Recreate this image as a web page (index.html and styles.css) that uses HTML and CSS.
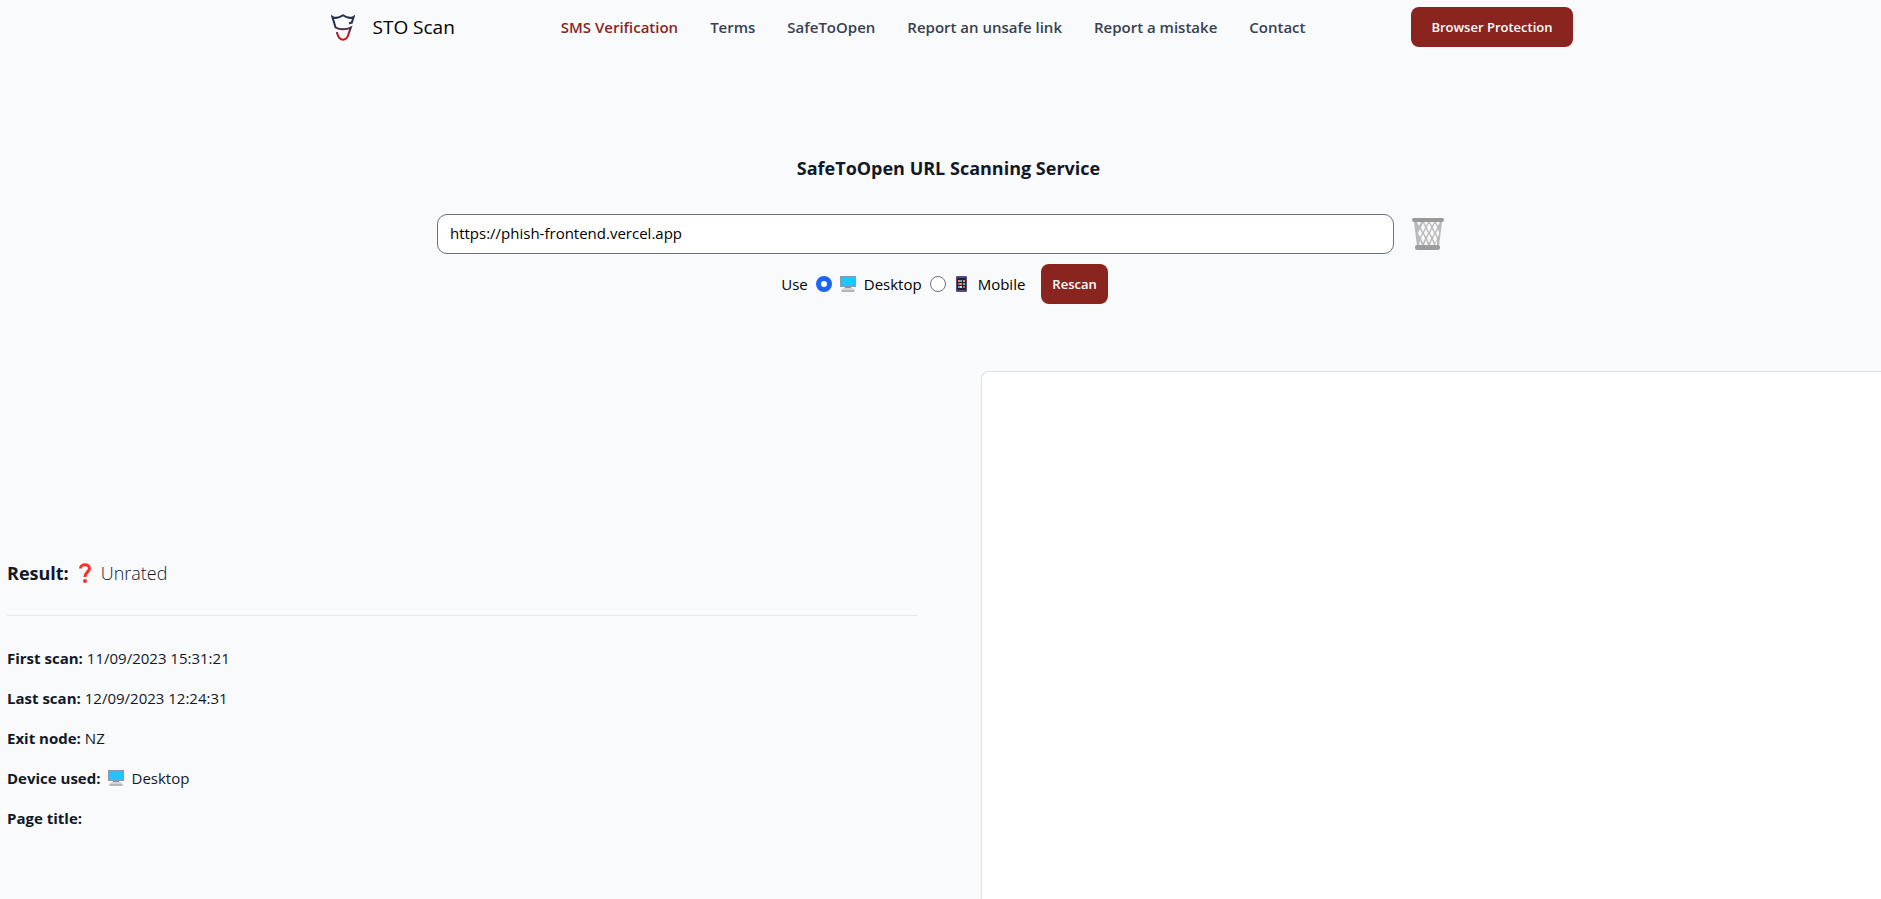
FILE: index.html
```html
<!DOCTYPE html>
<html lang="en">
<head>
<meta charset="utf-8">
<meta name="viewport" content="width=device-width, initial-scale=1">
<title>STO Scan</title>
<link rel="stylesheet" href="styles.css">
</head>
<body>
<svg class="sprite" aria-hidden="true">
  <defs>
    <symbol id="icon-desktop" viewBox="0 0 16 16">
      <path d="M0 0h16v11H0z" fill="#8c98a8"/>
      <path d="M1 1h14v9H1z" fill="#22c4fb"/>
      <path d="M5 11h6v1H5z" fill="#8b8f96"/>
      <path d="M3 12h10v1H3z" fill="#d2d3d5"/>
      <path d="M1.500 13.500h13V16h-13z" fill="#b5b5b5"/>
    </symbol>
  </defs>
</svg>

<header class="header">
  <a class="brand" href="#">
    <svg class="brand-logo" viewBox="0 0 24 27" aria-hidden="true">
      <defs>
        <linearGradient id="shield" x1="0" y1="0" x2="0" y2="27" gradientUnits="userSpaceOnUse">
          <stop offset="0.450" stop-color="#29304a"/>
          <stop offset="0.650" stop-color="#7c2438"/>
          <stop offset="0.850" stop-color="#c8141c"/>
        </linearGradient>
      </defs>
      <g fill="none" stroke="url(#shield)" stroke-width="2">
        <path d="M20.500 9.500 22.700 2.800C19.500 4.800 16 4 12 1.200 8 4 4.500 4.800 1.300 2.800L4.600 13.500C8.500 15.800 15.500 15.800 19.800 13.600L17.600 20C15.500 27.500 8.500 27.500 6.400 20L5.800 18"/>
        <path d="M21 8.300 18 9.500"/>
      </g>
    </svg>
    <span>STO Scan</span>
  </a>
  <nav class="nav">
    <a class="nav-link nav-link-active" href="#">SMS Verification</a>
    <a class="nav-link" href="#">Terms</a>
    <a class="nav-link" href="#">SafeToOpen</a>
    <a class="nav-link" href="#">Report an unsafe link</a>
    <a class="nav-link" href="#">Report a mistake</a>
    <a class="nav-link" href="#">Contact</a>
  </nav>
  <button class="button button-wide" type="button">Browser Protection</button>
</header>

<main class="main">
  <form class="scan">
    <h1 class="scan-title"><label for="url">SafeToOpen URL Scanning Service</label></h1>
    <div class="url-row">
      <input class="url-input" id="url" type="text" value="https://phish-frontend.vercel.app">
      <button class="clear" type="button" aria-label="Clear">
        <svg class="clear-icon" viewBox="0 0 32 32" aria-hidden="true">
          <path d="M2 4h28l-3 24H5z" fill="#bababa"/>
          <g fill="#f9fafc">
            <path d="M5 4h4L7 8zM12 4h4l-2 4zM18 4h4l-2 4zM24 4h4l-2 4z"/>
            <path d="m11 5 2.200 4.500L11 14 8.800 9.500zM17 5l2.200 4.500L17 14l-2.200-4.500zM23 5l2.200 4.500L23 14l-2.200-4.500z"/>
            <path d="m8 11 2 4-2 4-2-4zM14 11l2 4-2 4-2-4zM20 11l2 4-2 4-2-4zM26 11l1.200 4L26 19l-2-4z"/>
            <path d="m11 16 2 4.500-2 4.500-2-4.500zM17 16l2 4.500-2 4.500-2-4.500zM23 16l2 4.500-2 4.500-2-4.500z"/>
            <path d="m8 22 2 5H7zM14 22l2 5h-4zM20 22l2 5h-4zM25 22v5h-2z"/>
          </g>
          <rect x="0" y="0" width="32" height="4" rx="2" fill="#999"/>
          <rect x="3" y="27" width="25" height="5" rx="2" fill="#9d9d9d"/>
        </svg>
      </button>
    </div>
    <div class="device-row">
      <span class="device-label">Use</span>
      <input class="radio" id="desktop" type="radio" name="device" checked>
      <label class="device" for="desktop"><svg class="icon" aria-hidden="true"><use href="#icon-desktop"/></svg>Desktop</label>
      <input class="radio" id="mobile" type="radio" name="device">
      <label class="device" for="mobile">
        <svg class="icon" viewBox="0 0 16 16" aria-hidden="true">
          <rect x="2" y="0" width="11" height="16" rx="1" fill="#594a80"/>
          <path d="M3 2h9v12H3z" fill="#231f38"/>
          <path d="M4 4h2v2H4zM9 4h2v2H9zM6 7h2v2H6z" fill="#f79435"/>
          <path d="M6 4h2v2H6zM9 7h2v2H9zM4 10h2v2H4z" fill="#39bdf0"/>
          <path d="M4 7h2v2H4zM9 10h2v2H9z" fill="#e95b3c"/>
          <path d="M6 10h2v2H6z" fill="#e8d9b0"/>
        </svg>Mobile</label>
      <button class="button button-rescan" type="submit">Rescan</button>
    </div>
  </form>

  <div class="report">
    <section class="details">
      <h2 class="result">Result:
        <svg class="result-icon" viewBox="0 0 12 20" aria-hidden="true">
          <path d="M1.500 5.500C1.500 0.500 10.500 0.500 10.500 5.500 10.500 9 6 9 6 14" fill="none" stroke="#f8312f" stroke-width="3"/>
          <circle cx="6" cy="18" r="2" fill="#f8312f"/>
        </svg>
        <span class="result-value">Unrated</span>
      </h2>
      <dl class="facts">
        <div class="fact"><dt>First scan:</dt><dd>11/09/2023 15:31:21</dd></div>
        <div class="fact"><dt>Last scan:</dt><dd>12/09/2023 12:24:31</dd></div>
        <div class="fact"><dt>Exit node:</dt><dd>NZ</dd></div>
        <div class="fact fact-icon"><dt>Device used:</dt><dd class="device"><svg class="icon" aria-hidden="true"><use href="#icon-desktop"/></svg>Desktop</dd></div>
        <div class="fact"><dt>Page title:</dt><dd></dd></div>
      </dl>
    </section>
    <section class="preview" aria-label="Page preview"></section>
  </div>
</main>
</body>
</html>
```
FILE: styles.css
```css
* {
  box-sizing: border-box;
}

body {
  display: flex;
  flex-direction: column;
  min-height: 100vh;
  margin: 0;
  overflow: hidden;
  background: #f9fafc;
  color: #111827;
  font: 15px/24px "Open Sans", "Noto Sans", sans-serif;
}

a {
  color: inherit;
  text-decoration: none;
}

h1, h2, dl, dd {
  margin: 0;
}

.sprite {
  position: absolute;
  width: 0;
  height: 0;
}

.header {
  display: flex;
  align-items: center;
  justify-content: space-between;
  width: 100%;
  max-width: 1264px;
  margin: 0 auto;
  padding: 7px 0 7px 22px;
  white-space: nowrap;
}

.brand {
  display: flex;
  align-items: center;
  gap: 18px;
  color: #000;
  font-size: 19px;
  font-weight: 500;
}

.brand-logo {
  width: 24px;
  height: 27px;
}

.nav {
  display: flex;
  gap: 32px;
  color: #374151;
  font-weight: 600;
}

.nav-link-active {
  color: #8a241e;
}

.button {
  height: 40px;
  border: 0;
  border-radius: 8px;
  background: #8a241e;
  color: #fff;
  font: 600 13px/24px "Open Sans", "Noto Sans", sans-serif;
}

.button-wide {
  padding: 0 20px;
}

.button-rescan {
  margin-left: 8px;
  padding: 0 11px;
}

.main {
  display: flex;
  flex: 1;
  flex-direction: column;
}

.scan {
  display: flex;
  flex-direction: column;
  align-items: center;
  padding: 102px 0 67px 16px;
  color: #000;
}

.scan-title {
  color: #111827;
  font-size: 18px;
  font-weight: 700;
  line-height: 24px;
}

.url-row {
  display: flex;
  align-items: center;
  gap: 18px;
  width: 54%;
  margin-top: 34px;
  margin-right: 16px;
}

.url-input {
  flex: 1;
  height: 40px;
  padding: 0 12px 2px;
  border: 1px solid #6b7280;
  border-radius: 10px;
  background: #fff;
  color: #000;
  font: inherit;
}

.clear {
  display: flex;
  padding: 0;
  border: 0;
  background: none;
}

.clear-icon {
  width: 32px;
  height: 32px;
}

.device-row {
  display: flex;
  align-items: center;
  gap: 8px;
  margin-top: 10px;
  margin-right: 8px;
}

.device {
  display: flex;
  align-items: center;
  gap: 8px;
}

.icon {
  width: 16px;
  height: 16px;
}

.radio {
  appearance: none;
  width: 16px;
  height: 16px;
  margin: 0;
  border: 1px solid #6b7280;
  border-radius: 50%;
  background: #fff;
}

.radio:checked {
  border: 5px solid #1c64f2;
}

.report {
  display: grid;
  flex: 1;
  grid-template-columns: 1fr 1fr;
  gap: 64px;
  margin: 0 -10px 0 7px;
}

.details {
  padding-top: 184px;
}

.result {
  display: flex;
  align-items: center;
  gap: 10px;
  padding-bottom: 24px;
  border-bottom: 1px solid #e5e7eb;
  font-size: 18px;
  font-weight: 700;
  line-height: 36px;
}

.result-icon {
  width: 12px;
  height: 20px;
}

.result-value {
  font-weight: 300;
}

.facts {
  display: grid;
  gap: 16px;
  padding-top: 30px;
}

.fact {
  display: flex;
  gap: 4px;
}

.fact-icon {
  gap: 7px;
}

.fact dt {
  font-weight: 700;
}

.preview {
  border: 1px solid #d5e3ea;
  border-bottom: 0;
  border-radius: 8px 8px 0 0;
  background: #fff;
}
```
